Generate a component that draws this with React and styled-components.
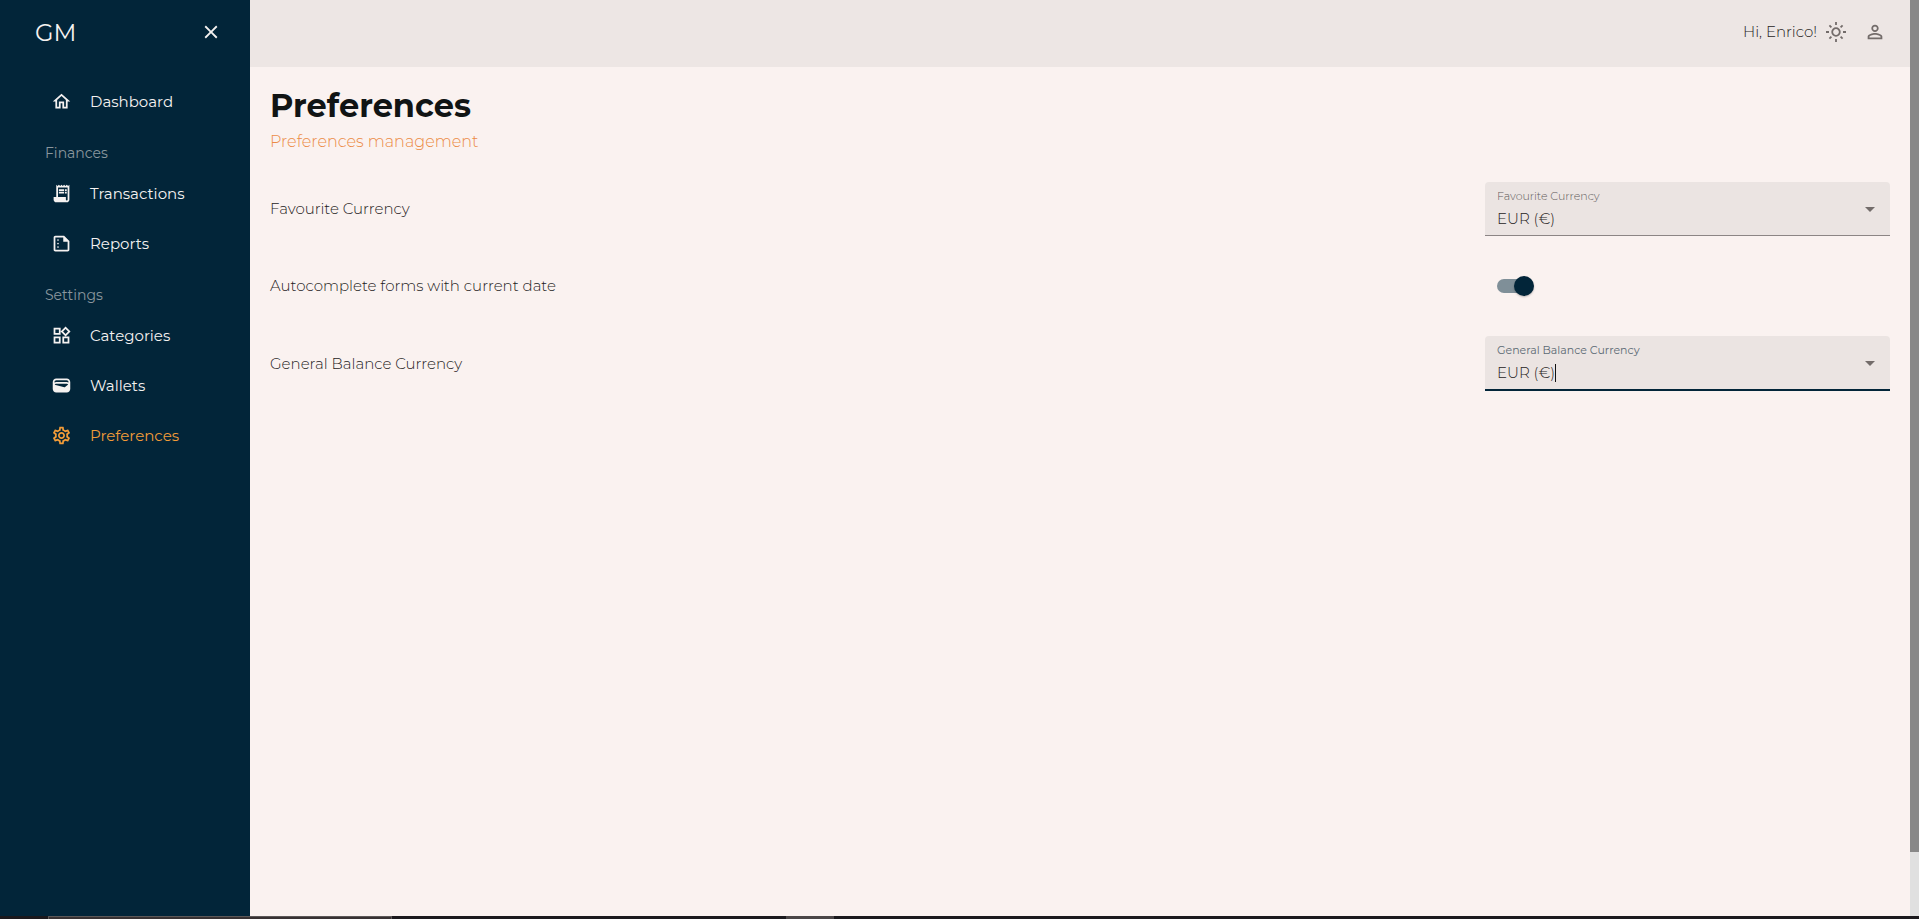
import React, { useState } from 'react';
import styled, { createGlobalStyle } from 'styled-components';
import {
  MdArrowDropDown,
  MdClose,
  MdOutlineHome,
  MdOutlineSettings,
  MdOutlineSummarize,
  MdOutlineWidgets,
  MdPersonOutline,
  MdReceiptLong,
  MdWallet,
} from 'react-icons/md';

const GlobalStyles = createGlobalStyle`
  :root {
    --navy: #022539;
    --orange: #f29c38;
    --paper: #faf2f0;
    --bar: #ede6e4;
    --field: #ebe4e2;
    --icon: #736c6a;
    --text: #1f1c1c;
  }
  * {
    box-sizing: border-box;
  }
  body {
    margin: 0;
    font-family: Montserrat, Inter, sans-serif;
    font-size: 16px;
    color: var(--text);
    background: var(--paper);
  }
  button {
    display: flex;
    padding: 0;
    border: 0;
    background: none;
    color: inherit;
    cursor: pointer;
  }
`;

const ScreenStyles = styled.div`
  display: flex;
  flex-direction: column;
  min-height: 100vh;
`;

const LayoutStyles = styled.div`
  flex: 1;
  display: grid;
  grid-template-columns: 250px 1fr 9px;
`;

const SidebarStyles = styled.aside`
  background: var(--navy);
  color: #f5f2f1;
`;

const BrandStyles = styled.div`
  display: flex;
  align-items: center;
  justify-content: space-between;
  height: 64px;
  padding: 0 28px 0 35px;
  font-size: 24px;
`;

const NavStyles = styled.nav`
  padding: 12px 0 0 45px;
`;

const NavHeading = styled.h2`
  margin: 0;
  padding-top: 12px;
  font-size: 14px;
  font-weight: 400;
  line-height: 30px;
  color: #8a979e;
`;

const NavLink = styled.a`
  display: flex;
  align-items: center;
  gap: 18px;
  height: 50px;
  padding-left: 6px;
  font-size: 15px;
  font-weight: 400;
  text-decoration: none;
  color: ${({ $active }) => ($active ? 'var(--orange)' : 'inherit')};
`;

const MainStyles = styled.div`
  min-width: 0;
`;

const TopBar = styled.header`
  display: flex;
  align-items: center;
  justify-content: flex-end;
  height: 67px;
  padding: 0 24px 4px 0;
  background: var(--bar);
  font-size: 15px;
  font-weight: 300;
  svg {
    color: var(--icon);
  }
  .theme {
    margin: 0 17px 0 8px;
  }
`;

const ContentStyles = styled.main`
  padding: 18px 20px;
  h1 {
    margin: 0;
    font-size: 32px;
    font-weight: 700;
    line-height: 42px;
    color: #111414;
  }
  p {
    margin: 0 0 26px;
    padding-top: 1px;
    font-size: 16px;
    font-weight: 300;
    line-height: 28px;
    color: #ec8b45;
  }
`;

const PreferenceRow = styled.div`
  display: grid;
  grid-template-columns: 3fr 1fr;
  align-items: center;
  min-height: 54px;
  margin-bottom: 23px;
  font-size: 15px;
  font-weight: 300;
  line-height: 20px;
`;

const FieldStyles = styled.div`
  position: relative;
  display: flex;
  flex-direction: column;
  height: ${({ $focused }) => ($focused ? '55px' : '54px')};
  border-bottom: ${({ $focused }) => ($focused ? '2px solid var(--navy)' : '1px solid #8c8585')};
  border-radius: 4px 4px 0 0;
  background: var(--field);
  label {
    padding: 7px 12px 0;
    font-size: 11px;
    font-weight: ${({ $focused }) => ($focused ? 400 : 300)};
    line-height: 14px;
    color: ${({ $focused }) => ($focused ? '#5c6a74' : '#625b5a')};
  }
  select {
    flex: 1;
    width: 100%;
    padding: 0 40px 0 12px;
    border: 0;
    outline: 0;
    appearance: none;
    background: none;
    font: inherit;
    color: inherit;
  }
  svg {
    position: absolute;
    top: 15px;
    right: 8px;
    color: var(--icon);
    pointer-events: none;
  }
`;

const Caret = styled.span`
  position: absolute;
  left: 70px;
  bottom: 7px;
  width: 1px;
  height: 18px;
  background: #111;
`;

const Switch = styled.input`
  appearance: none;
  display: flex;
  align-items: center;
  width: 34px;
  height: 14px;
  margin: 0 0 0 12px;
  border-radius: 7px;
  background: ${({ checked }) => (checked ? '#7f8f98' : '#b5aeac')};
  cursor: pointer;
  &::before {
    content: '';
    flex: none;
    width: 20px;
    height: 20px;
    margin-left: ${({ checked }) => (checked ? '17px' : '-3px')};
    border-radius: 50%;
    background: var(--navy);
    box-shadow: 0 1px 2px rgba(0, 0, 0, 0.25);
  }
`;

const ScrollTrack = styled.div`
  background: #e0e0e0;
`;

const ScrollThumb = styled.div`
  height: 93%;
  background: #888;
`;

const BottomEdge = styled.div`
  display: grid;
  grid-template-columns: 48px 344px 394px 48px 1fr;
  height: 3px;
  background: #1b191d;
  .window {
    border: 1px solid #5c5858;
    border-bottom: 0;
    background: #383233;
  }
  .active {
    background: #4b4647;
  }
`;

const SunIcon = () => (
  <svg width="22" height="22" viewBox="-11 -11 22 22" fill="none" stroke="currentColor" strokeWidth="1.8">
    <circle r="3.8" />
    <path d="M0-10v3M0 7v3M-10 0H-7M7 0h3M-6.6-6.6l2 2M4.6 4.6l2 2M-6.6 6.6l2-2M4.6-4.6l2-2" />
  </svg>
);

const currencies = ['EUR (€)', 'USD ($)', 'GBP (£)'];

function CurrencyField({ id, label, focused }) {
  return (
    <FieldStyles $focused={focused}>
      <label htmlFor={id}>{label}</label>
      <select id={id}>
        {currencies.map(currency => (
          <option key={currency}>{currency}</option>
        ))}
      </select>
      <MdArrowDropDown size={24} />
      {focused && <Caret />}
    </FieldStyles>
  );
}

function Sidebar() {
  return (
    <SidebarStyles>
      <BrandStyles>
        <span>GM</span>
        <button type="button" aria-label="Close menu">
          <MdClose size={22} />
        </button>
      </BrandStyles>
      <NavStyles>
        <NavLink href="#dashboard">
          <MdOutlineHome size={21} />
          Dashboard
        </NavLink>
        <NavHeading>Finances</NavHeading>
        <NavLink href="#transactions">
          <MdReceiptLong size={21} />
          Transactions
        </NavLink>
        <NavLink href="#reports">
          <MdOutlineSummarize size={21} />
          Reports
        </NavLink>
        <NavHeading>Settings</NavHeading>
        <NavLink href="#categories">
          <MdOutlineWidgets size={21} />
          Categories
        </NavLink>
        <NavLink href="#wallets">
          <MdWallet size={21} />
          Wallets
        </NavLink>
        <NavLink href="#preferences" $active>
          <MdOutlineSettings size={21} />
          Preferences
        </NavLink>
      </NavStyles>
    </SidebarStyles>
  );
}

export default function App() {
  const [autocomplete, setAutocomplete] = useState(true);
  return (
    <ScreenStyles>
      <GlobalStyles />
      <LayoutStyles>
        <Sidebar />
        <MainStyles>
          <TopBar>
            <span>Hi, Enrico!</span>
            <button type="button" className="theme" aria-label="Toggle theme">
              <SunIcon />
            </button>
            <button type="button" aria-label="Account">
              <MdPersonOutline size={22} />
            </button>
          </TopBar>
          <ContentStyles>
            <h1>Preferences</h1>
            <p>Preferences management</p>
            <PreferenceRow>
              <label htmlFor="favourite">Favourite Currency</label>
              <CurrencyField id="favourite" label="Favourite Currency" />
            </PreferenceRow>
            <PreferenceRow>
              <label htmlFor="autocomplete">Autocomplete forms with current date</label>
              <Switch
                id="autocomplete"
                type="checkbox"
                checked={autocomplete}
                onChange={e => setAutocomplete(e.target.checked)}
              />
            </PreferenceRow>
            <PreferenceRow>
              <label htmlFor="balance">General Balance Currency</label>
              <CurrencyField id="balance" label="General Balance Currency" focused />
            </PreferenceRow>
          </ContentStyles>
        </MainStyles>
        <ScrollTrack>
          <ScrollThumb />
        </ScrollTrack>
      </LayoutStyles>
      <BottomEdge>
        <span />
        <span className="window" />
        <span />
        <span className="active" />
      </BottomEdge>
    </ScreenStyles>
  );
}
